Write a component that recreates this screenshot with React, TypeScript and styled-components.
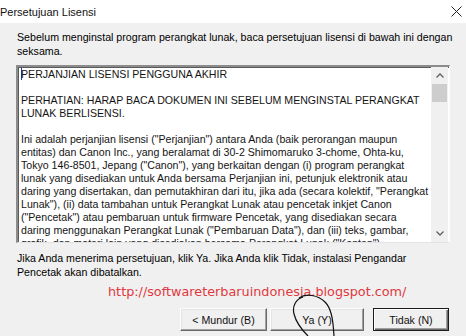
import styled, { createGlobalStyle } from "styled-components";

const GlobalStyle = createGlobalStyle`
  html, body {
    margin: 0;
    padding: 0;
    background: #f0f0f0;
  }
`;

const Dialog = styled.div`
  position: relative;
  width: 466px;
  height: 336px;
  overflow: hidden;
  background: #f0f0f0;
  font-family: "Liberation Sans", Arial, sans-serif;
  color: #000;
`;

const TitleBar = styled.div`
  height: 23px;
  background: #fff;
  display: flex;
  align-items: center;
  justify-content: space-between;
  padding: 0 4px 0 0;
  font-size: 11px;
  color: #111;
`;

const CloseIcon = () => (
  <svg width="11" height="11" viewBox="0 0 11 11">
    <path d="M0.5 0.5 L10.5 10.5 M10.5 0.5 L0.5 10.5" stroke="#222" strokeWidth="1" fill="none" />
  </svg>
);

const Body = styled.div`
  padding: 7px 16px 0 16px;
`;

const Paragraph = styled.div<{ $indent?: number }>`
  font-size: 10.65px;
  line-height: 14px;
  padding-left: ${(p) => p.$indent ?? 1}px;
  white-space: nowrap;
`;

const LicenseBox = styled.div`
  margin-top: 7px;
  height: 178px;
  box-sizing: border-box;
  display: flex;
  background: #fff;
  border-style: solid;
  border-width: 2px 1px 1px 2px;
  border-color: #8c8c8c #fdfdfd #e3e3e3 #8c8c8c;
  box-shadow: inset 1px 1px 0 #5a5a5a;
  overflow: hidden;
`;

const LicenseText = styled.div`
  flex: 1;
  padding: 1px 0 0 3px;
  font-size: 10.6px;
  line-height: 13px;
  color: #141414;
  white-space: nowrap;
  overflow: hidden;
`;

const Caret = styled.span`
  display: inline-block;
  width: 1px;
  height: 12px;
  margin-right: -1px;
  vertical-align: -2px;
  background: #1a3f9c;
`;

const Scrollbar = styled.div`
  width: 17px;
  margin-right: 1px;
  background: #f0f0f0;
  display: flex;
  flex-direction: column;
  align-items: center;
`;

const ArrowButton = styled.div`
  height: 17px;
  width: 17px;
  display: flex;
  align-items: center;
  justify-content: center;
`;

const Track = styled.div`
  flex: 1;
  width: 15px;
`;

const Thumb = styled.div`
  height: 18px;
  width: 15px;
  background: #cdcdcd;
`;

const Chevron = ({ down }: { down?: boolean }) => (
  <svg width="8" height="5" viewBox="0 0 8 5">
    <path
      d={down ? "M0.5 0.5 L4 4 L7.5 0.5" : "M0.5 4.5 L4 1 L7.5 4.5"}
      stroke="#606060"
      strokeWidth="1.3"
      fill="none"
    />
  </svg>
);

const Footer = styled.div`
  margin-top: 8px;
`;

const Url = styled.div`
  margin-top: 6px;
  padding-left: 92px;
  font-family: "DejaVu Sans", Verdana, sans-serif;
  font-size: 12.8px;
  line-height: 14px;
  color: #e0383f;
  white-space: nowrap;
`;

const ButtonRow = styled.div`
  margin-top: 9px;
  display: flex;
  justify-content: flex-end;
  padding-right: 1px;
`;

const Button = styled.div<{ $width: number; $gap?: number; $isDefault?: boolean }>`
  width: ${(p) => p.$width}px;
  height: 23px;
  margin-left: ${(p) => p.$gap ?? 0}px;
  box-sizing: border-box;
  display: flex;
  align-items: center;
  justify-content: center;
  font-size: 10.65px;
  color: #111;
  background: #f0f0f0;
  border: 1px solid;
  border-color: ${(p) => (p.$isDefault ? "#1c1c1c" : "#fdfdfd #6a6a6a #6a6a6a #fdfdfd")};
  box-shadow: ${(p) =>
    p.$isDefault
      ? "inset 1px 1px 0 #fdfdfd, inset -1px -1px 0 #6a6a6a, inset -2px -2px 0 #a0a0a0"
      : "inset -1px -1px 0 #a0a0a0, inset 1px 1px 0 #e3e3e3"};
`;

const Scribble = styled.svg`
  position: absolute;
  left: 0;
  top: 0;
  pointer-events: none;
`;

const licenseLines = [
  "PERJANJIAN LISENSI PENGGUNA AKHIR",
  "",
  "PERHATIAN: HARAP BACA DOKUMEN INI SEBELUM MENGINSTAL PERANGKAT",
  "LUNAK BERLISENSI.",
  "",
  "Ini adalah perjanjian lisensi (\"Perjanjian\") antara Anda (baik perorangan maupun",
  "entitas) dan Canon Inc., yang beralamat di 30-2 Shimomaruko 3-chome, Ohta-ku,",
  "Tokyo 146-8501, Jepang (\"Canon\"), yang berkaitan dengan (i) program perangkat",
  "lunak yang disediakan untuk Anda bersama Perjanjian ini, petunjuk elektronik atau",
  "daring yang disertakan, dan pemutakhiran dari itu, jika ada (secara kolektif, \"Perangkat",
  "Lunak\"), (ii) data tambahan untuk Perangkat Lunak atau pencetak inkjet Canon",
  "(\"Pencetak\") atau pembaruan untuk firmware Pencetak, yang disediakan secara",
  "daring menggunakan Perangkat Lunak (\"Pembaruan Data\"), dan (iii) teks, gambar,",
  "grafik, dan materi lain yang disediakan bersama Perangkat Lunak (\"Konten\").",
];

export default function App() {
  return (
    <>
      <GlobalStyle />
      <Dialog>
        <TitleBar>
          <span>Persetujuan Lisensi</span>
          <CloseIcon />
        </TitleBar>
        <Body>
          <Paragraph>
            Sebelum menginstal program perangkat lunak, baca persetujuan lisensi di bawah ini dengan
            <br />
            seksama.
          </Paragraph>
          <LicenseBox>
            <LicenseText>
              {licenseLines.map((line, i) => (
                <div key={i}>
                  {i === 0 && <Caret />}
                  {line || "\u00a0"}
                </div>
              ))}
            </LicenseText>
            <Scrollbar>
              <ArrowButton>
                <Chevron />
              </ArrowButton>
              <Thumb />
              <Track />
              <ArrowButton>
                <Chevron down />
              </ArrowButton>
            </Scrollbar>
          </LicenseBox>
          <Footer>
            <Paragraph>
              Jika Anda menerima persetujuan, klik Ya. Jika Anda klik Tidak, instalasi Pengandar
              <br />
              Pencetak akan dibatalkan.
            </Paragraph>
          </Footer>
          <Url>http://softwareterbaruindonesia.blogspot.com/</Url>
          <ButtonRow>
            <Button $width={87}>&lt; Mundur (B)</Button>
            <Button $width={94} $gap={3}>Ya (Y)</Button>
            <Button $width={76} $gap={9} $isDefault>Tidak (N)</Button>
          </ButtonRow>
        </Body>
        <Scribble width="466" height="336" viewBox="0 0 466 336">
          <path
            d="M303 297 C296 299 292 306 294 314 C296 322 302 330 308 336"
            stroke="#111"
            strokeWidth="1.2"
            fill="none"
          />
          <path
            d="M299 298 C306 293 318 295 325 302 C331 308 333 318 334 336"
            stroke="#111"
            strokeWidth="1.2"
            fill="none"
          />
        </Scribble>
      </Dialog>
    </>
  );
}
